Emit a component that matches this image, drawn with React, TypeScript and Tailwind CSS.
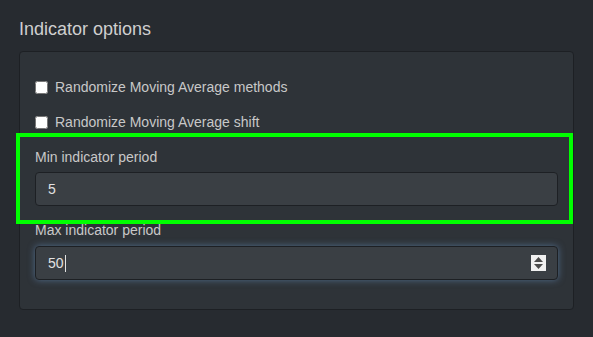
import { useState } from 'react'

export default function App() {
  const [methods, setMethods] = useState(false)
  const [shift, setShift] = useState(false)
  const [minPeriod, setMinPeriod] = useState('5')

  return (
    <main className="relative min-h-[337px] bg-[#272b30] px-[19px] pt-[18px] pb-[26px] font-['Liberation_Sans',Arial,sans-serif] text-[#c8c8c8]">
      <h2 className="text-[18px] leading-[22px] text-[#cfcfcf]">Indicator options</h2>

      {/* Options panel */}
      <div className="mt-[11px] rounded-[4px] border border-[#1d2024] bg-[#2e3338] px-[15px] pt-[25px] pb-[29px]">
        <label className="flex h-[20px] items-center text-[14px] leading-[20px]">
          <input
            type="checkbox"
            checked={methods}
            onChange={(e) => setMethods(e.target.checked)}
            className="m-0 mr-[7px] h-[13px] w-[13px]"
          />
          Randomize Moving Average methods
        </label>

        <label className="mt-[15px] flex h-[20px] items-center text-[14px] leading-[20px]">
          <input
            type="checkbox"
            checked={shift}
            onChange={(e) => setShift(e.target.checked)}
            className="m-0 mr-[7px] h-[13px] w-[13px]"
          />
          Randomize Moving Average shift
        </label>

        {/* Min period */}
        <div className="mt-[15px]">
          <div className="text-[14px] leading-[20px]">Min indicator period</div>
          <input
            type="text"
            value={minPeriod}
            onChange={(e) => setMinPeriod(e.target.value)}
            className="mt-[5px] block h-[34px] w-full rounded-[4px] border border-[#1d2024] bg-[#3a3f44] px-[12px] text-[14px] text-[#e2e2e2] outline-none"
          />
        </div>

        {/* Max period (focused) */}
        <div className="mt-[14px]">
          <div className="text-[14px] leading-[20px]">Max indicator period</div>
          <div className="relative mt-[6px] flex h-[34px] w-full items-center rounded-[4px] border border-[#1d2024] bg-[#3a3f44] px-[12px] text-[14px] text-[#e2e2e2] shadow-[0_0_7px_rgba(110,155,205,0.55)]">
            <span>50</span>
            <span className="ml-px h-[17px] w-px bg-[#e2e2e2]" />
            <div className="absolute top-[8px] right-[11px] flex h-[16px] w-[15px] flex-col items-center justify-center gap-[2px] bg-[#f0f0f0]">
              <svg width="9" height="5" viewBox="0 0 9 5">
                <path d="M4.5 0 L9 5 L0 5 Z" fill="#4a4a4a" />
              </svg>
              <svg width="9" height="5" viewBox="0 0 9 5">
                <path d="M0 0 L9 0 L4.5 5 Z" fill="#4a4a4a" />
              </svg>
            </div>
          </div>
        </div>
      </div>

      {/* Highlight overlay */}
      <div className="pointer-events-none absolute top-[133px] left-[16px] h-[91px] w-[557px] border-4 border-[#00ff00]" />
    </main>
  )
}
